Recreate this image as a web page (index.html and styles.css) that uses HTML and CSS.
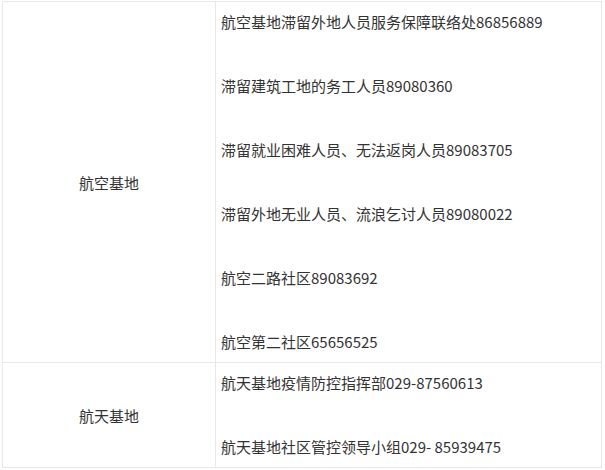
FILE: index.html
```html
<!DOCTYPE html>
<html lang="zh-CN">
<head>
<meta charset="utf-8">
<link rel="stylesheet" href="styles.css">
</head>
<body>
<div class="wrap">
<table class="contacts">
  <tr>
    <td class="area">航空基地</td>
    <td class="list">
      <p>航空基地滞留外地人员服务保障联络处86856889</p>
      <p>滞留建筑工地的务工人员89080360</p>
      <p>滞留就业困难人员、无法返岗人员89083705</p>
      <p>滞留外地无业人员、流浪乞讨人员89080022</p>
      <p>航空二路社区89083692</p>
      <p>航空第二社区65656525</p>
    </td>
  </tr>
  <tr>
    <td class="area">航天基地</td>
    <td class="list">
      <p>航天基地疫情防控指挥部029-87560613</p>
      <p>航天基地社区管控领导小组029- 85939475</p>
    </td>
  </tr>
</table>
</div>
</body>
</html>
```
FILE: styles.css
```css
html, body {
  margin: 0;
  padding: 0;
  background: #fff;
}
.wrap {
  padding: 1px 0 0 2px;
}
.contacts {
  border-collapse: collapse;
  width: 600px;
  font-family: "Noto Sans CJK SC", "Microsoft YaHei", sans-serif;
  font-size: 15px;
  color: #333;
}
.contacts td {
  border: 1px solid #e8e8e8;
  padding: 0 5px;
  vertical-align: middle;
}
.contacts .area {
  width: 202px;
  text-align: center;
}
.contacts .list p {
  margin: 0 0 24px;
  line-height: 40px;
  white-space: nowrap;
}
.contacts .list p:last-child {
  margin-bottom: 0;
}
```
